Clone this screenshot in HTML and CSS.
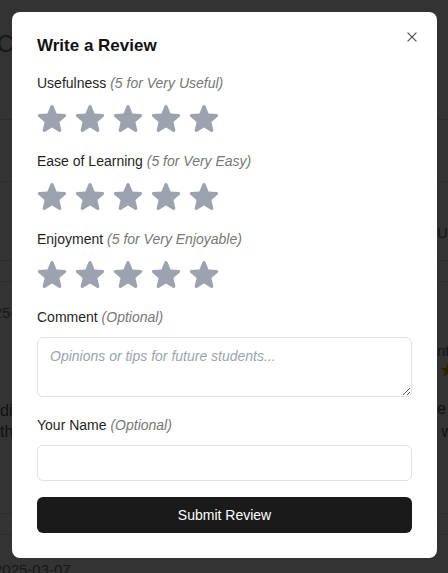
FILE: index.html
```html
<!DOCTYPE html>
<html lang="en">
<head>
    <meta charset="UTF-8">
    <meta name="viewport" content="width=device-width, initial-scale=1.0">
    <title>Write a Review</title>
    <link rel="stylesheet" href="styles.css">
</head>
<body>
    <svg class="defs" width="0" height="0">
        <symbol id="star" viewBox="0 0 20 20">
            <path d="M10.868 2.884c-.321-.772-1.415-.772-1.736 0l-1.83 4.401-4.753.381c-.833.067-1.171 1.107-.536 1.651l3.62 3.102-1.106 4.637c-.194.813.691 1.456 1.405 1.02L10 15.591l4.069 2.485c.713.436 1.598-.207 1.404-1.02l-1.106-4.637 3.62-3.102c.635-.544.297-1.584-.536-1.65l-4.752-.382-1.831-4.401z"/>
        </symbol>
    </svg>

    <!-- page behind the dialog -->
    <div class="page">
        <header class="page-header">
            <h1>Course Reviews</h1>
        </header>
        <div class="page-row tall"></div>
        <div class="page-row split">
            <span></span>
            <span class="side-text">Updated</span>
        </div>
        <div class="page-row thin"></div>
        <div class="review-card">
            <div class="card-left">
                <p class="date">2025-03-05</p>
                <p class="body-text">discussions were great and the</p>
                <p class="body-text">the workload was fair overall</p>
            </div>
            <div class="card-right">
                <p class="side-text">nt:</p>
                <p class="side-star">&#9733;</p>
                <p class="body-text">e f</p>
                <p class="body-text">&nbsp;w</p>
            </div>
        </div>
        <div class="page-row thin"></div>
        <p class="date last">2025-03-07</p>
    </div>

    <div class="overlay">
        <div class="modal">
            <button class="close-btn" aria-label="Close">
                <svg width="10" height="10" viewBox="0 0 10 10"><path d="M0.6 0.6L9.4 9.4M9.4 0.6L0.6 9.4"/></svg>
            </button>
            <h2 class="modal-title">Write a Review</h2>

            <div class="field">
                <label class="field-label">Usefulness <em>(5 for Very Useful)</em></label>
                <div class="stars">
                    <svg><use href="#star"/></svg>
                    <svg><use href="#star"/></svg>
                    <svg><use href="#star"/></svg>
                    <svg><use href="#star"/></svg>
                    <svg><use href="#star"/></svg>
                </div>
            </div>
            <div class="field">
                <label class="field-label">Ease of Learning <em>(5 for Very Easy)</em></label>
                <div class="stars">
                    <svg><use href="#star"/></svg>
                    <svg><use href="#star"/></svg>
                    <svg><use href="#star"/></svg>
                    <svg><use href="#star"/></svg>
                    <svg><use href="#star"/></svg>
                </div>
            </div>
            <div class="field">
                <label class="field-label">Enjoyment <em>(5 for Very Enjoyable)</em></label>
                <div class="stars">
                    <svg><use href="#star"/></svg>
                    <svg><use href="#star"/></svg>
                    <svg><use href="#star"/></svg>
                    <svg><use href="#star"/></svg>
                    <svg><use href="#star"/></svg>
                </div>
            </div>
            <div class="field text-field comment">
                <label class="field-label">Comment <em>(Optional)</em></label>
                <textarea placeholder="Opinions or tips for future students..."></textarea>
            </div>
            <div class="field text-field">
                <label class="field-label">Your Name <em>(Optional)</em></label>
                <input type="text">
            </div>
            <button class="submit-btn">Submit Review</button>
        </div>
    </div>
</body>
</html>
```

FILE: styles.css
```css
body {
    font-family: "Liberation Sans", Arial, sans-serif;
    margin: 0;
    padding: 0;
    color: #1f1f1f;
    background: #fff;
    overflow: hidden;
}
.defs {
    position: absolute;
}

/* page behind */
.page {
    margin-left: -40px;
    width: 560px;
}
.page-header {
    height: 119px;
    border-bottom: 1px solid #dcdcdc;
}
.page-header h1 {
    margin: 0;
    padding: 31px 0 0 37px;
    font-size: 23px;
    font-weight: 400;
    color: #777;
}
.page-row {
    border-bottom: 1px solid #dcdcdc;
}
.page-row.tall {
    height: 61px;
}
.page-row.thin {
    height: 20px;
}
.page-row.split {
    height: 79px;
    display: grid;
    grid-template-columns: 477px 1fr;
    align-items: center;
    padding-top: 22px;
    box-sizing: border-box;
}
.side-text {
    margin: 0;
    font-size: 15px;
    color: #666;
}
.review-card {
    height: 232px;
    border-bottom: 1px solid #dcdcdc;
    display: grid;
    grid-template-columns: 477px 1fr;
    padding-top: 22px;
    box-sizing: border-box;
}
.card-left {
    padding-left: 17px;
}
.card-left .body-text {
    padding-left: 23px;
}
.date {
    margin: 0 0 79px;
    font-size: 15px;
    color: #777;
}
.body-text {
    margin: 0;
    font-size: 16px;
    line-height: 21px;
    color: #555;
}
.card-right .side-text {
    margin-top: 38px;
}
.side-star {
    margin: 0 0 16px 2px;
    font-size: 20px;
    line-height: 22px;
    color: #c9a227;
}
.card-right .body-text {
    line-height: 23px;
}
.date.last {
    margin: 26px 0 0 34px;
}

/* overlay + dialog */
.overlay {
    position: fixed;
    top: 0;
    left: 0;
    right: 0;
    bottom: 0;
    background: rgba(0, 0, 0, 0.8);
    padding: 12px 11px 0 12px;
}
.modal {
    position: relative;
    background: #fff;
    border-radius: 8px;
    padding: 25px;
}
.close-btn {
    position: absolute;
    top: 20px;
    right: 20px;
    width: 10px;
    height: 10px;
    padding: 0;
    border: none;
    background: none;
    display: flex;
}
.close-btn svg path {
    stroke: #555;
    stroke-width: 1.3;
    fill: none;
}
.modal-title {
    margin: 0 0 18px;
    font-size: 17px;
    line-height: 18px;
    font-weight: 700;
    color: #111;
}
.field {
    margin-bottom: 16px;
}
.field-label {
    display: block;
    font-size: 14px;
    line-height: 20px;
    margin-bottom: 8px;
    color: #1f1f1f;
}
.field-label em {
    color: #777;
}
.stars {
    display: flex;
    gap: 4px;
    height: 34px;
    margin-left: -2px;
}
.stars svg {
    width: 34px;
    height: 34px;
    fill: #9ca3af;
}
.text-field .field-label {
    margin-bottom: 10px;
}
.comment {
    margin-bottom: 18px;
}
textarea, input {
    display: block;
    width: 100%;
    box-sizing: border-box;
    border: 1px solid #e2e2e2;
    border-radius: 6px;
    font-family: "Liberation Sans", Arial, sans-serif;
    font-size: 14px;
    line-height: 20px;
    padding: 8px 12px;
    color: #1f1f1f;
}
textarea {
    height: 60px;
}
textarea::placeholder {
    font-style: italic;
    color: #9ca3af;
}
input {
    height: 36px;
}
.submit-btn {
    display: block;
    width: 100%;
    height: 36px;
    border: none;
    border-radius: 6px;
    background: #1a1a1a;
    color: #fff;
    font-family: "Liberation Sans", Arial, sans-serif;
    font-size: 14px;
}
```
